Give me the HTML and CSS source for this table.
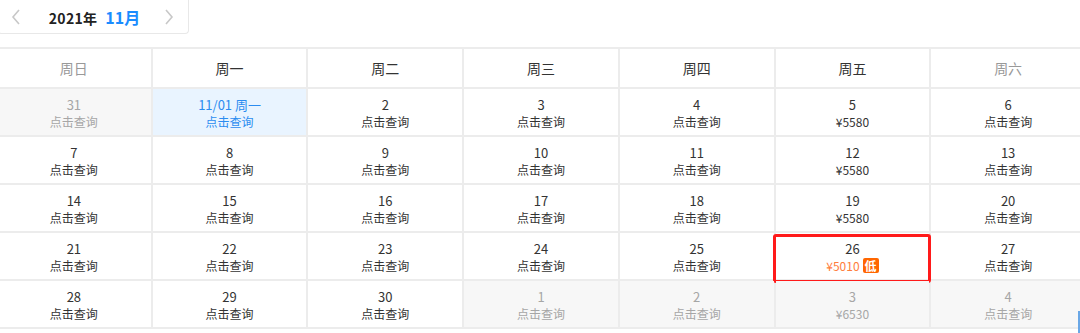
FILE: index.html
```html
<!DOCTYPE html>
<html lang="zh">
<head>
<meta charset="utf-8">
<link rel="stylesheet" href="styles.css">
</head>
<body>
<div class="page">
  <div class="nav">
    <span class="chev">
      <svg width="10" height="16" viewBox="0 0 10 16"><path d="M8 1 L2 8 L8 15" fill="none" stroke="#c8c8c8" stroke-width="1.6"/></svg>
    </span>
    <span class="title"><span class="year">2021年</span><span class="month">11月</span></span>
    <span class="chev">
      <svg width="10" height="16" viewBox="0 0 10 16"><path d="M2 1 L8 8 L2 15" fill="none" stroke="#c8c8c8" stroke-width="1.6"/></svg>
    </span>
  </div>
  <div class="cal">
    <div class="hd weekend">周日</div>
    <div class="hd">周一</div>
    <div class="hd">周二</div>
    <div class="hd">周三</div>
    <div class="hd">周四</div>
    <div class="hd">周五</div>
    <div class="hd weekend">周六</div>

    <div class="cell off"><div class="d">31</div><div class="s">点击查询</div></div>
    <div class="cell today"><div class="d">11/01 周一</div><div class="s">点击查询</div></div>
    <div class="cell"><div class="d">2</div><div class="s">点击查询</div></div>
    <div class="cell"><div class="d">3</div><div class="s">点击查询</div></div>
    <div class="cell"><div class="d">4</div><div class="s">点击查询</div></div>
    <div class="cell"><div class="d">5</div><div class="s">¥5580</div></div>
    <div class="cell"><div class="d">6</div><div class="s">点击查询</div></div>

    <div class="cell"><div class="d">7</div><div class="s">点击查询</div></div>
    <div class="cell"><div class="d">8</div><div class="s">点击查询</div></div>
    <div class="cell"><div class="d">9</div><div class="s">点击查询</div></div>
    <div class="cell"><div class="d">10</div><div class="s">点击查询</div></div>
    <div class="cell"><div class="d">11</div><div class="s">点击查询</div></div>
    <div class="cell"><div class="d">12</div><div class="s">¥5580</div></div>
    <div class="cell"><div class="d">13</div><div class="s">点击查询</div></div>

    <div class="cell"><div class="d">14</div><div class="s">点击查询</div></div>
    <div class="cell"><div class="d">15</div><div class="s">点击查询</div></div>
    <div class="cell"><div class="d">16</div><div class="s">点击查询</div></div>
    <div class="cell"><div class="d">17</div><div class="s">点击查询</div></div>
    <div class="cell"><div class="d">18</div><div class="s">点击查询</div></div>
    <div class="cell"><div class="d">19</div><div class="s">¥5580</div></div>
    <div class="cell"><div class="d">20</div><div class="s">点击查询</div></div>

    <div class="cell"><div class="d">21</div><div class="s">点击查询</div></div>
    <div class="cell"><div class="d">22</div><div class="s">点击查询</div></div>
    <div class="cell"><div class="d">23</div><div class="s">点击查询</div></div>
    <div class="cell"><div class="d">24</div><div class="s">点击查询</div></div>
    <div class="cell"><div class="d">25</div><div class="s">点击查询</div></div>
    <div class="cell low"><div class="d">26</div><div class="s price">¥5010<span class="badge">低</span></div><div class="ring"></div></div>
    <div class="cell"><div class="d">27</div><div class="s">点击查询</div></div>

    <div class="cell"><div class="d">28</div><div class="s">点击查询</div></div>
    <div class="cell"><div class="d">29</div><div class="s">点击查询</div></div>
    <div class="cell"><div class="d">30</div><div class="s">点击查询</div></div>
    <div class="cell off"><div class="d">1</div><div class="s">点击查询</div></div>
    <div class="cell off"><div class="d">2</div><div class="s">点击查询</div></div>
    <div class="cell off"><div class="d">3</div><div class="s">¥6530</div></div>
    <div class="cell off"><div class="d">4</div><div class="s">点击查询</div></div>
  </div>
  <div class="scroll"></div>
</div>
</body>
</html>
```

FILE: styles.css
```css
html, body {
  margin: 0;
  padding: 0;
  background: #ffffff;
  overflow: hidden;
}
body {
  font-family: "Noto Sans CJK SC", "Noto Sans", sans-serif;
  color: #333333;
  width: 1080px;
  height: 333px;
}
.page {
  position: relative;
  width: 1080px;
  height: 333px;
  overflow: hidden;
}
.nav {
  width: 191px;
  height: 34px;
  margin-left: -2px;
  box-sizing: border-box;
  border: 1px solid #e8e8e8;
  border-top: none;
  border-radius: 0 0 4px 4px;
  display: flex;
  align-items: center;
  justify-content: space-between;
  padding: 0 14px 0 12px;
}
.chev {
  display: flex;
  align-items: center;
}
.title {
  display: flex;
  align-items: baseline;
  gap: 8px;
  margin-left: 4px;
}
.year {
  font-size: 14px;
  font-weight: 700;
  color: #222222;
  letter-spacing: 0.3px;
}
.month {
  font-size: 16px;
  font-weight: 700;
  color: #1a8cff;
}
.cal {
  margin-top: 13px;
  margin-left: -3px;
  width: 1088px;
  display: grid;
  grid-template-columns: repeat(7, 1fr);
  grid-auto-rows: 46px;
  grid-template-rows: 38px;
  gap: 2px;
  background: #ececec;
  border-top: 2px solid #ececec;
  border-bottom: 2px solid #ececec;
}
.hd {
  background: #ffffff;
  display: flex;
  align-items: center;
  justify-content: center;
  font-size: 14px;
  color: #333333;
}
.hd.weekend {
  color: #999999;
}
.cell {
  position: relative;
  background: #ffffff;
  text-align: center;
  box-sizing: border-box;
  padding-top: 7px;
}
.cell .d {
  color: #333333;
  font-size: 13px;
  line-height: 17px;
}
.cell .s {
  color: #333333;
  font-size: 12px;
  line-height: 17px;
}
.cell.off {
  background: #f7f7f7;
}
.cell.off .d,
.cell.off .s {
  color: #a6a6a6;
}
.cell.today {
  background: #e9f4ff;
}
.cell.today .d,
.cell.today .s {
  color: #2b8cf0;
}
.price {
  display: flex;
  justify-content: center;
  align-items: center;
  gap: 3px;
}
.cell .s.price {
  color: #ff7d3c;
}
.badge {
  display: inline-block;
  background: #ff6600;
  color: #ffffff;
  font-size: 12px;
  font-weight: 700;
  line-height: 15px;
  padding: 0 2px;
  border-radius: 2px;
}
.ring {
  position: absolute;
  left: -3px;
  right: -2px;
  top: 1px;
  bottom: -4px;
  border: 3px solid #ff1a1a;
  border-radius: 3px;
}
.scroll {
  position: absolute;
  right: 0;
  top: 311px;
  width: 2px;
  height: 22px;
  background: #6aa7e6;
}
```
